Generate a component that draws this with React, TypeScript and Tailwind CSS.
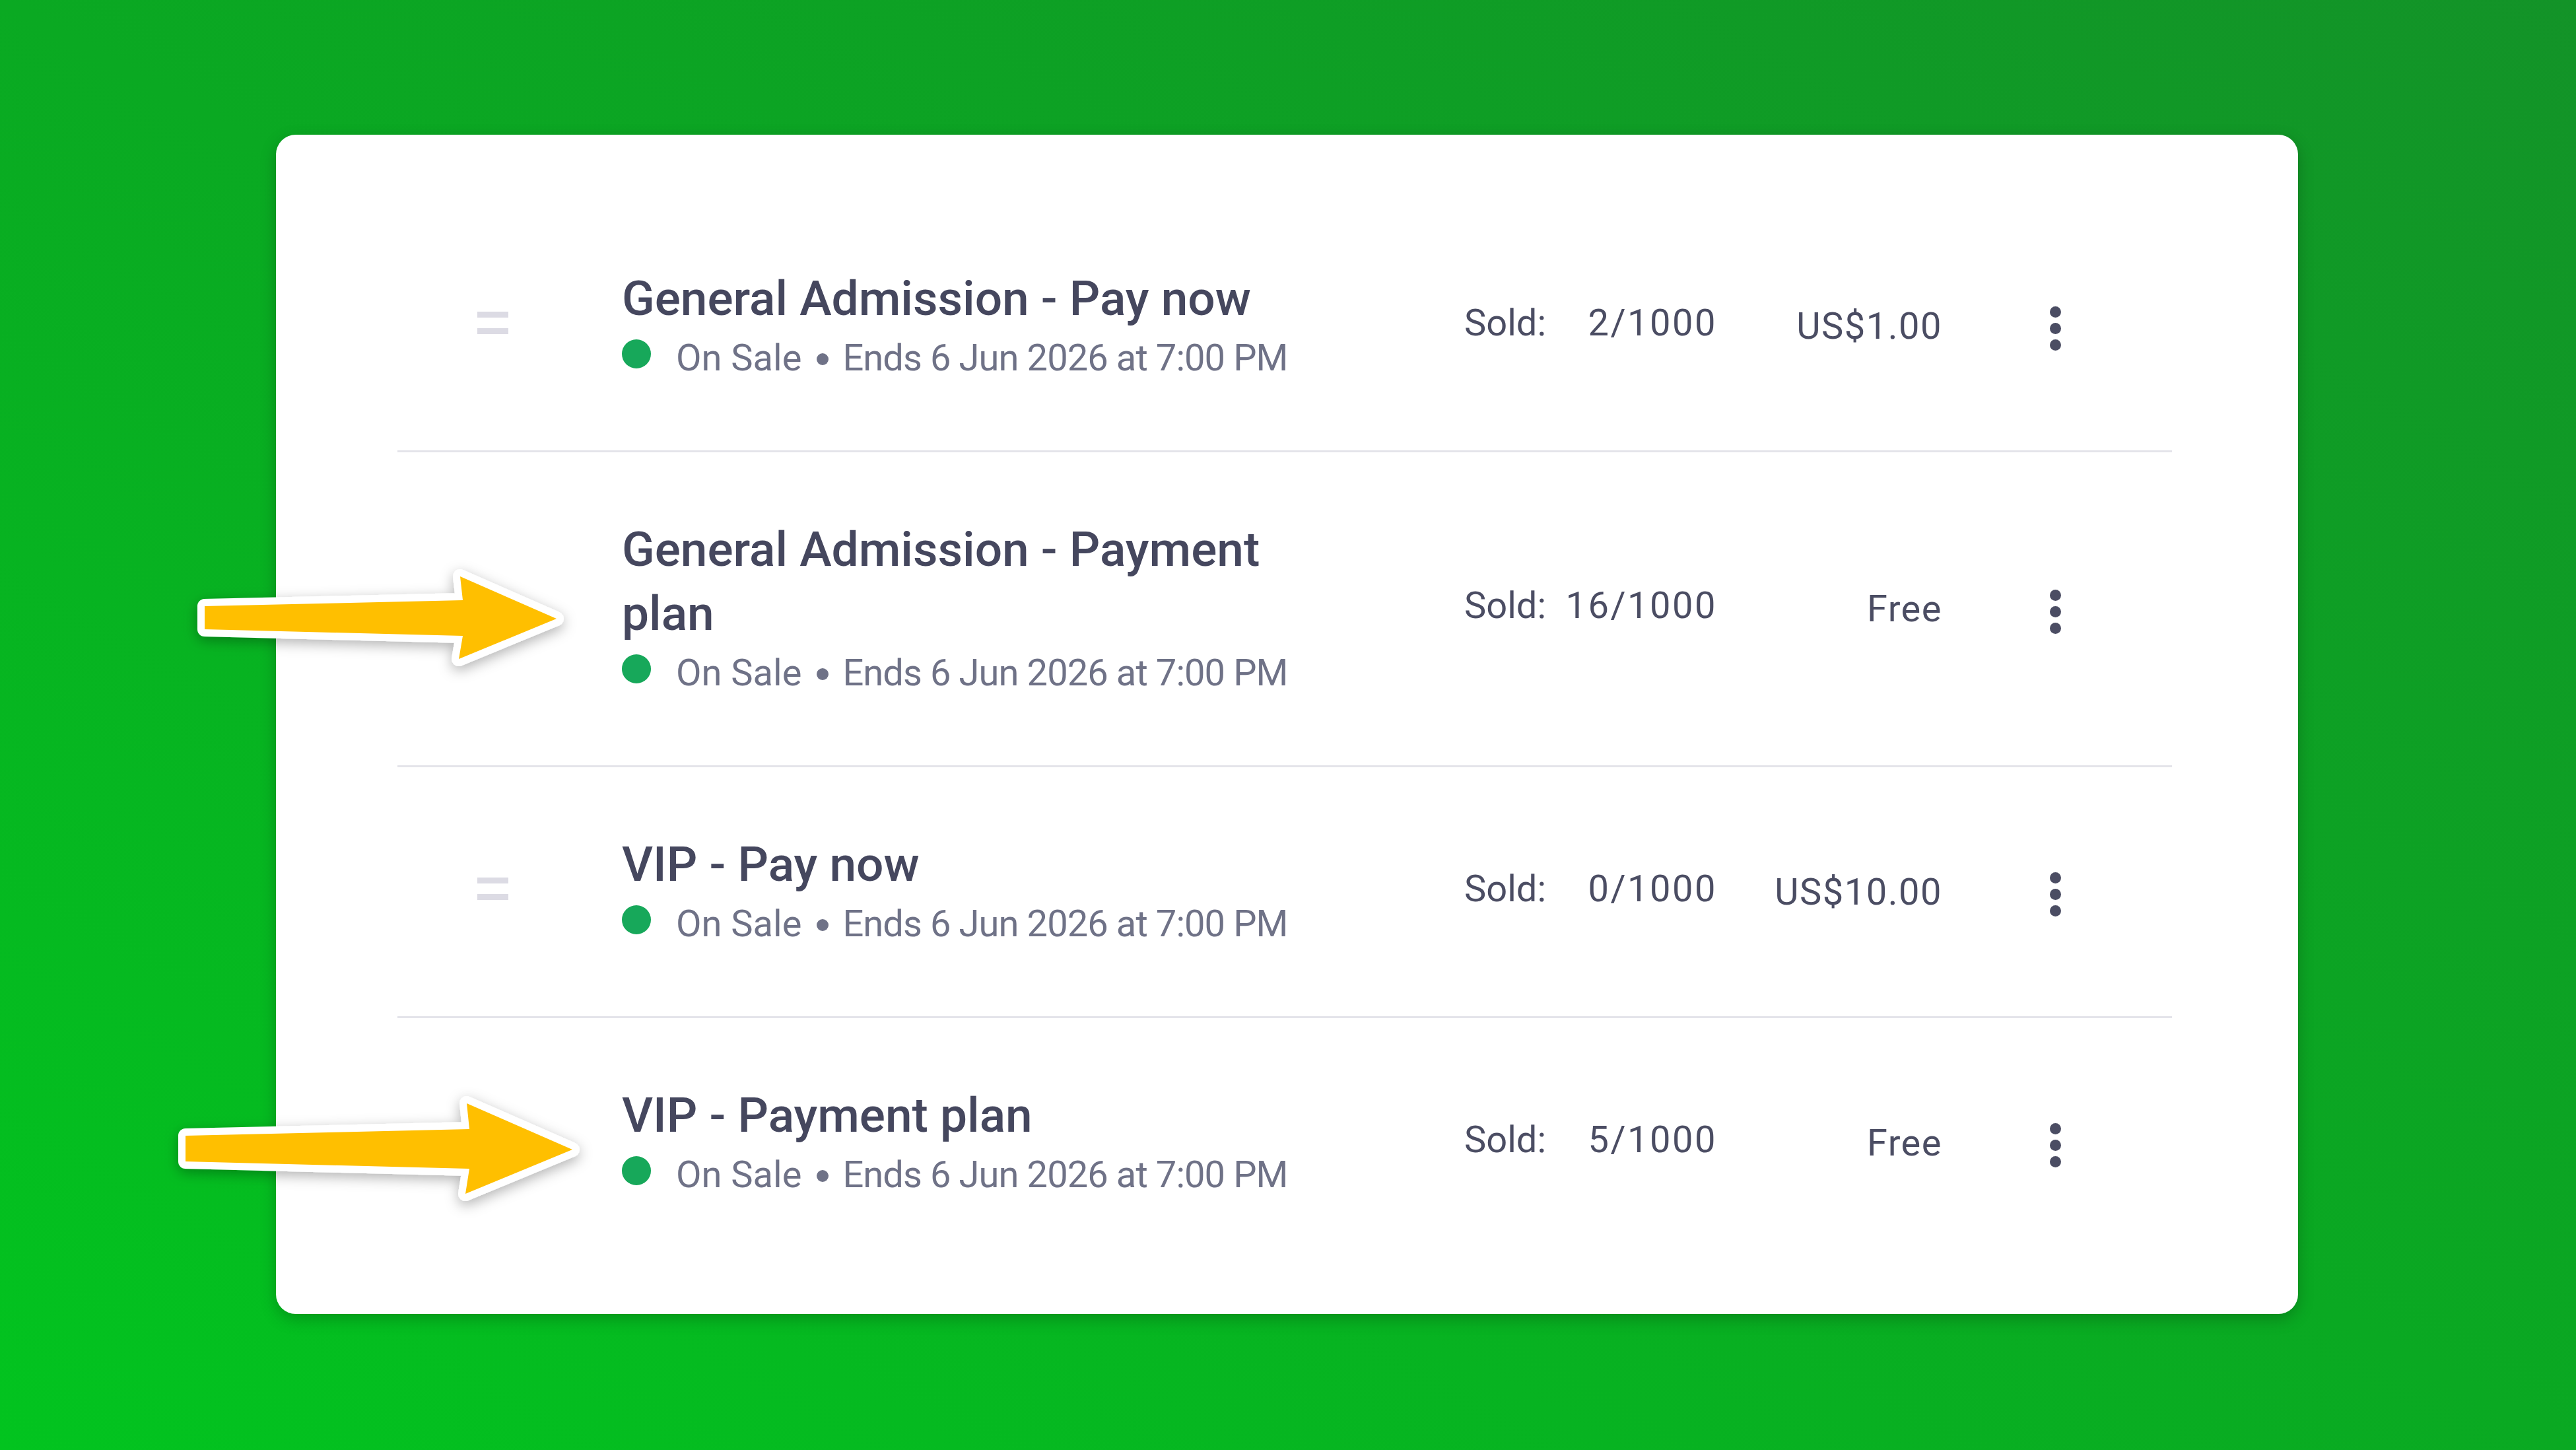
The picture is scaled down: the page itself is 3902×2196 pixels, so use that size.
import React from "react";

type Row = { title: string; sold: string; price: string };

const rows: Row[] = [
  { title: "General Admission - Pay now", sold: "2/1000", price: "US$1.00" },
  { title: "General Admission - Payment plan", sold: "16/1000", price: "Free" },
  { title: "VIP - Pay now", sold: "0/1000", price: "US$10.00" },
  { title: "VIP - Payment plan", sold: "5/1000", price: "Free" },
];

function TicketRow({ row, last }: { row: Row; last: boolean }) {
  return (
    <div
      className={
        "flex items-center py-[99px] " +
        (last ? "" : "border-b-[3px] border-[#e4e4ea]")
      }
    >
      <div className="w-[340px] shrink-0 pl-[121px]">
        <div className="flex flex-col gap-[16px] w-[47px] mb-[9px]">
          <div className="h-[9px] bg-[#dcdbe4]" />
          <div className="h-[9px] bg-[#dcdbe4]" />
        </div>
      </div>
      <div className="w-[1276px] shrink-0">
        <div className="max-w-[1010px]">
          <div className="text-[73px] leading-[97px] font-medium text-[#45475e]">
            {row.title}
          </div>
          <div className="flex items-center text-[56px] leading-[82px] text-[#6f7287] whitespace-nowrap">
            <span className="w-[44px] h-[44px] rounded-full bg-[#17a85a] mr-[38px] mb-[12px] shrink-0" />
            <span>On Sale</span>
            <span className="w-[18px] h-[18px] rounded-full bg-[#6f7287] ml-[23px] mr-[21px] mt-[4px] shrink-0" />
            <span className="tracking-[-0.9px]">Ends 6 Jun 2026 at 7:00 PM</span>
          </div>
        </div>
      </div>
      <div className="w-[381px] shrink-0 flex justify-between text-[56px] leading-[82px] text-[#4b4d63] mb-[10px]">
        <span>Sold:</span>
        <span className="tracking-[2.5px] -mr-[2px]">{row.sold}</span>
      </div>
      <div className="w-[341px] shrink-0 text-right text-[56px] leading-[82px] text-[#4b4d63]">
        <span className="tracking-[1.5px] -mr-[2px]">{row.price}</span>
      </div>
      <div className="ml-[165px] flex flex-col gap-[8px] mt-[8px]">
        <span className="w-[17px] h-[17px] rounded-full bg-[#4b4d63]" />
        <span className="w-[17px] h-[17px] rounded-full bg-[#4b4d63]" />
        <span className="w-[17px] h-[17px] rounded-full bg-[#4b4d63]" />
      </div>
    </div>
  );
}

export default function App() {
  return (
    <div className="relative w-[3902px] h-[2196px] overflow-hidden bg-[linear-gradient(to_top_right,#02c41f,#0aa922_50%,#139328)] pl-[418px] pt-[204px] font-['Roboto',sans-serif]">
      <div className="w-[3063px] h-[1786px] rounded-[30px] bg-white shadow-[0_8px_24px_rgba(0,0,0,0.22)] pl-[184px] pr-[191px] pt-[101px]">
        {rows.map((r, i) => (
          <TicketRow key={i} row={r} last={i === rows.length - 1} />
        ))}
      </div>
      <svg
        className="absolute inset-0 pointer-events-none"
        width="3902"
        height="2196"
        viewBox="0 0 3902 2196"
      >
        <defs>
          <filter id="arrowShadow" x="-20%" y="-60%" width="140%" height="220%">
            <feDropShadow dx="0" dy="6" stdDeviation="10" floodColor="#000" floodOpacity="0.3" />
          </filter>
        </defs>
        <g filter="url(#arrowShadow)">
          <polygon
            points="310,918 701,909 697,873 843,937 695,998 701,963 310,953"
            fill="#ffbf00"
            stroke="#ffffff"
            strokeWidth="22"
            strokeLinejoin="round"
            paintOrder="stroke"
          />
          <polygon
            points="281,1720 711,1710 707,1671 867,1741 705,1808 711,1770 281,1759"
            fill="#ffbf00"
            stroke="#ffffff"
            strokeWidth="22"
            strokeLinejoin="round"
            paintOrder="stroke"
          />
        </g>
      </svg>
    </div>
  );
}
